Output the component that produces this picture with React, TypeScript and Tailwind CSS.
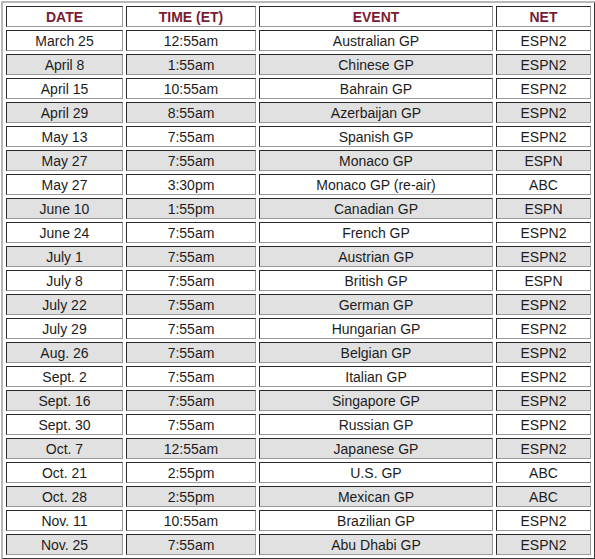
import React from 'react';

type Race = {
  date: string;
  time: string;
  event: string;
  net: string;
};

const races: Race[] = [
  { date: 'March 25', time: '12:55am', event: 'Australian GP', net: 'ESPN2' },
  { date: 'April 8', time: '1:55am', event: 'Chinese GP', net: 'ESPN2' },
  { date: 'April 15', time: '10:55am', event: 'Bahrain GP', net: 'ESPN2' },
  { date: 'April 29', time: '8:55am', event: 'Azerbaijan GP', net: 'ESPN2' },
  { date: 'May 13', time: '7:55am', event: 'Spanish GP', net: 'ESPN2' },
  { date: 'May 27', time: '7:55am', event: 'Monaco GP', net: 'ESPN' },
  { date: 'May 27', time: '3:30pm', event: 'Monaco GP (re-air)', net: 'ABC' },
  { date: 'June 10', time: '1:55pm', event: 'Canadian GP', net: 'ESPN' },
  { date: 'June 24', time: '7:55am', event: 'French GP', net: 'ESPN2' },
  { date: 'July 1', time: '7:55am', event: 'Austrian GP', net: 'ESPN2' },
  { date: 'July 8', time: '7:55am', event: 'British GP', net: 'ESPN' },
  { date: 'July 22', time: '7:55am', event: 'German GP', net: 'ESPN2' },
  { date: 'July 29', time: '7:55am', event: 'Hungarian GP', net: 'ESPN2' },
  { date: 'Aug. 26', time: '7:55am', event: 'Belgian GP', net: 'ESPN2' },
  { date: 'Sept. 2', time: '7:55am', event: 'Italian GP', net: 'ESPN2' },
  { date: 'Sept. 16', time: '7:55am', event: 'Singapore GP', net: 'ESPN2' },
  { date: 'Sept. 30', time: '7:55am', event: 'Russian GP', net: 'ESPN2' },
  { date: 'Oct. 7', time: '12:55am', event: 'Japanese GP', net: 'ESPN2' },
  { date: 'Oct. 21', time: '2:55pm', event: 'U.S. GP', net: 'ABC' },
  { date: 'Oct. 28', time: '2:55pm', event: 'Mexican GP', net: 'ABC' },
  { date: 'Nov. 11', time: '10:55am', event: 'Brazilian GP', net: 'ESPN2' },
  { date: 'Nov. 25', time: '7:55am', event: 'Abu Dhabi GP', net: 'ESPN2' },
];

// inset cell border, like an old border="1" table
const cell =
  'h-[21px] p-0 text-center align-middle border border-t-[#2a2a2a] border-l-[#2a2a2a] border-r-[#9a9a9a] border-b-[#9a9a9a] leading-none';

export default function App() {
  return (
    <div className="w-[595px] bg-white pt-px pl-px font-['Liberation_Sans',Arial,sans-serif]">
      <table className="table-fixed w-[593px] border-separate border-spacing-[3px] border-2 border-t-[#b8b8b8] border-l-[#b8b8b8] border-r-[#3a3a3a] border-b-[#3a3a3a]">
        <colgroup>
          <col className="w-[117px]" />
          <col className="w-[130px]" />
          <col className="w-[234px]" />
          <col className="w-[95px]" />
        </colgroup>
        <thead>
          <tr>
            {['DATE', 'TIME (ET)', 'EVENT', 'NET'].map((h) => (
              <th key={h} className={`${cell} bg-white text-[14px] font-bold text-[#7a1c33]`}>
                {h}
              </th>
            ))}
          </tr>
        </thead>
        <tbody>
          {races.map((r, i) => {
            const bg = i % 2 === 1 ? 'bg-[#e1e1e1]' : 'bg-white';
            return (
              <tr key={i} className="text-[14px] text-[#1c1c1c]">
                <td className={`${cell} ${bg}`}>{r.date}</td>
                <td className={`${cell} ${bg}`}>{r.time}</td>
                <td className={`${cell} ${bg}`}>{r.event}</td>
                <td className={`${cell} ${bg}`}>{r.net}</td>
              </tr>
            );
          })}
        </tbody>
      </table>
    </div>
  );
}
